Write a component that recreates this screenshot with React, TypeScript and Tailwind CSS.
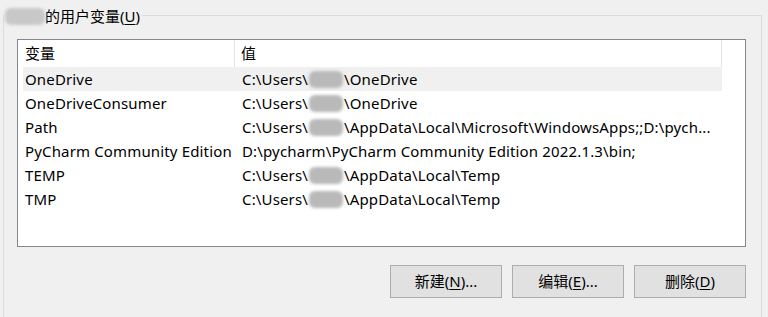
const font = "font-['Segoe_UI','Noto_Sans','Noto_Sans_CJK_SC',sans-serif]";

function Blob({ w = 34 }: { w?: number }) {
  return (
    <span
      className="mx-[1px] inline-block h-[17px] rounded-[6px] bg-[#b9b9b9] align-[-3px] blur-[1.5px]"
      style={{ width: w }}
    />
  );
}

const rows: { name: string; pre: string; post: string; blob?: boolean }[] = [
  { name: "OneDrive", pre: "C:\\Users\\", post: "\\OneDrive", blob: true },
  { name: "OneDriveConsumer", pre: "C:\\Users\\", post: "\\OneDrive", blob: true },
  {
    name: "Path",
    pre: "C:\\Users\\",
    post: "\\AppData\\Local\\Microsoft\\WindowsApps;;D:\\pych...",
    blob: true,
  },
  {
    name: "PyCharm Community Edition",
    pre: "D:\\pycharm\\PyCharm Community Edition 2022.1.3\\bin;",
    post: "",
  },
  { name: "TEMP", pre: "C:\\Users\\", post: "\\AppData\\Local\\Temp", blob: true },
  { name: "TMP", pre: "C:\\Users\\", post: "\\AppData\\Local\\Temp", blob: true },
];

function Button({ label, k, rest }: { label: string; k: string; rest: string }) {
  return (
    <button className="flex h-[33px] w-[112px] items-center justify-center border border-[#adadad] bg-[#e1e1e1] text-[15px] text-black">
      {label}(<span className="underline underline-offset-2">{k}</span>){rest}
    </button>
  );
}

export default function App() {
  return (
    <div className={`h-[317px] w-[768px] overflow-hidden bg-[#f0f0f0] ${font} text-[15px] text-black`}>
      <div className="relative ml-[3px] mt-[15px] h-[320px] w-[759px] border-l border-r border-t border-[#dcdcdc] pl-[13px] pt-[23px]">
        <div className="absolute left-[1px] top-[-9px] flex items-center bg-[#f0f0f0] pr-[2px] leading-[18px]">
          <span className="inline-block h-[17px] w-[40px] rounded-[6px] bg-[#c8c8c8] blur-[1.5px]" />
          <span>的用户变量(<span className="underline underline-offset-2">U</span>)</span>
        </div>

        <div className="h-[208px] w-[729px] border border-[#828790] bg-white">
          <div className="flex h-[27px] w-[704px] items-center">
            <div className="flex h-full w-[217px] items-center border-r border-[#e5e5e5] pl-[7px]">变量</div>
            <div className="flex h-full flex-1 items-center border-r border-[#e5e5e5] pl-[6px]">值</div>
          </div>
          <div className="pl-[5px] tracking-[0.15px]">
            {rows.map((r, i) => (
              <div
                key={r.name}
                className={`flex h-[24px] w-[699px] items-center whitespace-nowrap ${i === 0 ? "bg-[#f0f0f0]" : ""}`}
              >
                <div className="w-[212px] pl-[2px]">{r.name}</div>
                <div className="flex-1 pl-[7px]">
                  {r.pre}
                  {r.blob && <Blob />}
                  {r.post}
                </div>
              </div>
            ))}
          </div>
        </div>

        <div className="mt-[18px] flex justify-end gap-[10px] pr-[15px]">
          <Button label="新建" k="N" rest="..." />
          <Button label="编辑" k="E" rest="..." />
          <Button label="删除" k="D" rest="" />
        </div>
      </div>
    </div>
  );
}
